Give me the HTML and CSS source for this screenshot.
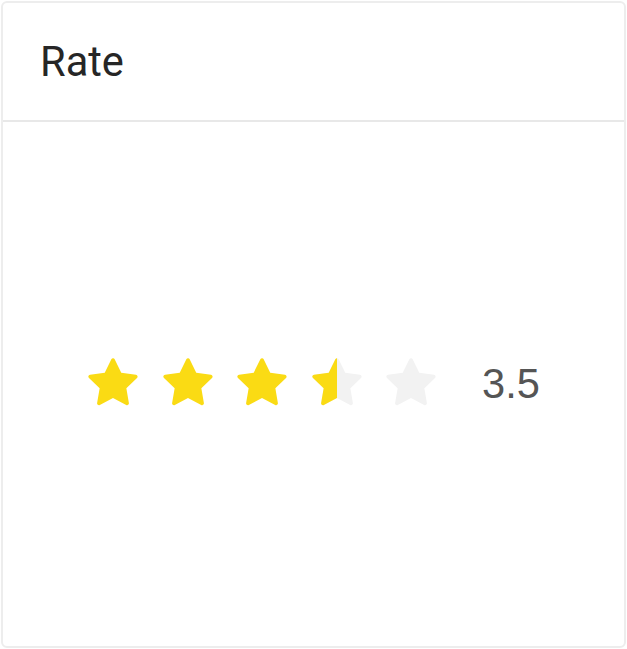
FILE: index.html
```html
<!DOCTYPE html>
<html>
<head>
<meta charset="utf-8">
<link rel="stylesheet" href="styles.css">
</head>
<body>
<div class="card">
  <div class="card-head"><span class="card-title">Rate</span></div>
  <div class="card-body">
    <div class="rate">
      <svg class="star" viewBox="64 64 896 896"><path class="on" d="M908.1 353.1l-253.9-36.9L540.7 86.1c-3.1-6.3-8.2-11.4-14.5-14.5-15.8-7.8-35-1.3-42.9 14.5L369.8 316.2l-253.9 36.9c-7 1-13.4 4.3-18.3 9.3a32.05 32.05 0 00.6 45.3l183.7 179.1-43.4 252.9a31.950 31.950 0 0046.4 33.7L512 754l227.1 119.4c6.2 3.300 13.4 4.4 20.3 3.2 17.4-3 29.1-19.5 26.1-36.9l-43.4-252.9 183.7-179.1c5-4.9 8.3-11.3 9.3-18.3 2.7-17.5-9.5-33.7-27-36.3z"/></svg>
      <svg class="star" viewBox="64 64 896 896"><path class="on" d="M908.1 353.1l-253.9-36.9L540.7 86.1c-3.1-6.3-8.2-11.4-14.5-14.5-15.8-7.8-35-1.3-42.9 14.5L369.8 316.2l-253.9 36.9c-7 1-13.4 4.3-18.3 9.3a32.05 32.05 0 00.6 45.3l183.7 179.1-43.4 252.9a31.950 31.950 0 0046.4 33.7L512 754l227.1 119.4c6.2 3.300 13.4 4.4 20.3 3.2 17.4-3 29.1-19.5 26.1-36.9l-43.4-252.9 183.7-179.1c5-4.9 8.3-11.3 9.3-18.3 2.7-17.5-9.5-33.7-27-36.3z"/></svg>
      <svg class="star" viewBox="64 64 896 896"><path class="on" d="M908.1 353.1l-253.9-36.9L540.7 86.1c-3.1-6.3-8.2-11.4-14.5-14.5-15.8-7.8-35-1.3-42.9 14.5L369.8 316.2l-253.9 36.9c-7 1-13.4 4.3-18.3 9.3a32.05 32.05 0 00.6 45.3l183.7 179.1-43.4 252.9a31.950 31.950 0 0046.4 33.7L512 754l227.1 119.4c6.2 3.300 13.4 4.4 20.3 3.2 17.4-3 29.1-19.5 26.1-36.9l-43.4-252.9 183.7-179.1c5-4.9 8.3-11.3 9.3-18.3 2.7-17.5-9.5-33.7-27-36.3z"/></svg>
      <svg class="star" viewBox="64 64 896 896">
        <defs><clipPath id="half"><rect x="64" y="64" width="448" height="896"/></clipPath></defs>
        <path class="off" d="M908.1 353.1l-253.9-36.9L540.7 86.1c-3.1-6.3-8.2-11.4-14.5-14.5-15.8-7.8-35-1.3-42.9 14.5L369.8 316.2l-253.9 36.9c-7 1-13.4 4.3-18.3 9.3a32.05 32.05 0 00.6 45.3l183.7 179.1-43.4 252.9a31.950 31.950 0 0046.4 33.7L512 754l227.1 119.4c6.2 3.300 13.4 4.4 20.3 3.2 17.4-3 29.1-19.5 26.1-36.9l-43.4-252.9 183.7-179.1c5-4.9 8.3-11.3 9.3-18.3 2.7-17.5-9.5-33.7-27-36.3z"/>
        <path class="on" clip-path="url(#half)" d="M908.1 353.1l-253.9-36.9L540.7 86.1c-3.1-6.3-8.2-11.4-14.5-14.5-15.8-7.8-35-1.3-42.9 14.5L369.8 316.2l-253.9 36.9c-7 1-13.4 4.3-18.3 9.3a32.05 32.05 0 00.6 45.3l183.7 179.1-43.4 252.9a31.950 31.950 0 0046.4 33.7L512 754l227.1 119.4c6.2 3.300 13.4 4.4 20.3 3.2 17.4-3 29.1-19.5 26.1-36.9l-43.4-252.9 183.7-179.1c5-4.9 8.3-11.3 9.3-18.3 2.7-17.5-9.5-33.7-27-36.3z"/>
      </svg>
      <svg class="star" viewBox="64 64 896 896"><path class="off" d="M908.1 353.1l-253.9-36.9L540.7 86.1c-3.1-6.3-8.2-11.4-14.5-14.5-15.8-7.8-35-1.3-42.9 14.5L369.8 316.2l-253.9 36.9c-7 1-13.4 4.3-18.3 9.3a32.05 32.05 0 00.6 45.3l183.7 179.1-43.4 252.9a31.950 31.950 0 0046.4 33.7L512 754l227.1 119.4c6.2 3.300 13.4 4.4 20.3 3.2 17.4-3 29.1-19.5 26.1-36.9l-43.4-252.9 183.7-179.1c5-4.9 8.3-11.3 9.3-18.3 2.7-17.5-9.5-33.7-27-36.3z"/></svg>
      <span class="rate-text">3.5</span>
    </div>
  </div>
</div>
</body>
</html>
```

FILE: styles.css
```css
html, body {
  margin: 0;
  padding: 0;
  background: #ffffff;
}
body {
  font-family: Roboto, "Liberation Sans", sans-serif;
}
.card {
  box-sizing: border-box;
  margin: 1px;
  width: 625px;
  height: 647px;
  border: 2px solid #ededed;
  border-radius: 6px;
  display: flex;
  flex-direction: column;
  background: #fff;
}
.card-head {
  height: 117px;
  border-bottom: 2px solid #e8e8e8;
  display: flex;
  align-items: center;
  padding-left: 37px;
}
.card-title {
  font-size: 41.6px;
  color: #262626;
  line-height: 1;
}
.card-body {
  flex: 1;
  display: flex;
  align-items: center;
  justify-content: center;
}
.rate {
  display: flex;
  align-items: center;
  gap: 22.6px;
}
.star {
  width: 52px;
  height: 52px;
  display: block;
}
.on { fill: #fadb14; }
.off { fill: #f2f2f2; }
.rate-text {
  margin-left: 22px;
  font-family: "Liberation Sans", Arial, sans-serif;
  font-size: 41.6px;
  color: #555555;
  line-height: 1;
}
```
